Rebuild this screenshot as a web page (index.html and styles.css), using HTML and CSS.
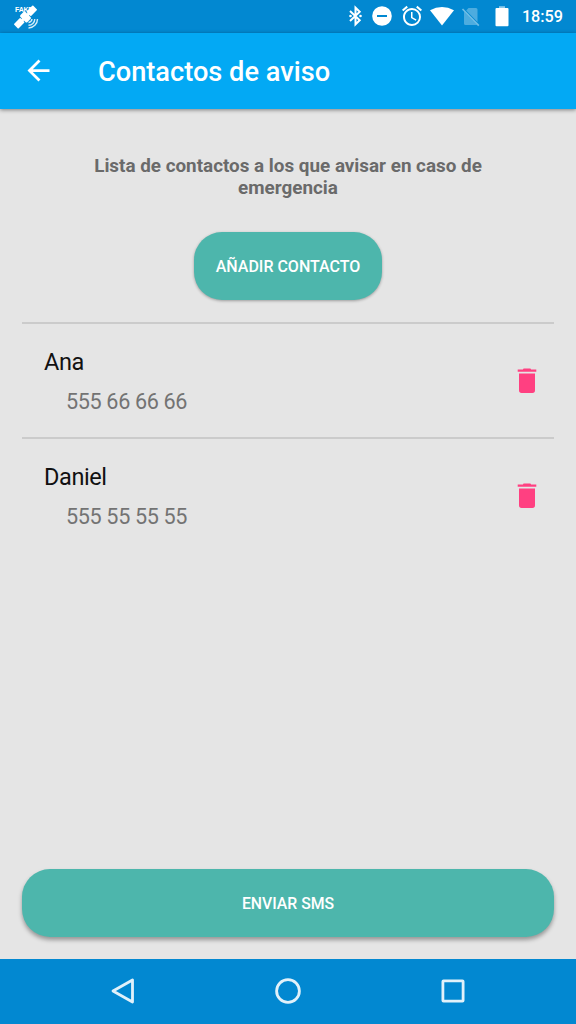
FILE: index.html
```html
<!DOCTYPE html>
<html lang="es">
<head>
<meta charset="utf-8">
<title>Contactos de aviso</title>
<link rel="stylesheet" href="styles.css">
</head>
<body>
<div class="screen">
  <div class="status">
    <svg class="satellite" width="26" height="26" viewBox="0 0 26 26">
      <text class="fake" x="1" y="7.800" textLength="18">FAKE</text>
      <g transform="translate(11.500 13) rotate(-45)" fill="#fff">
        <rect x="-13.500" y="-3.200" width="9.200" height="6.400" rx=".8"/>
        <rect x="-3.600" y="-5" width="7.200" height="10" rx="1.500"/>
        <rect x="4.300" y="-3.200" width="9.200" height="6.400" rx=".8"/>
        <rect x="-6" y="-1.500" width="12" height="3"/>
      </g>
      <path d="M14.500 18.500a4 4 0 0 0 3.500-3.500M14.500 21.300a6.500 6.500 0 0 0 6.300-6.300M14.500 24a9 9 0 0 0 9-9" fill="none" stroke="#d5ecf8" stroke-width="1.400"/>
    </svg>
    <div class="indicators">
      <svg width="24" height="24" viewBox="0 0 24 24"><path d="M7 7l9.700 9.200-4.200 4.100V3.700l4.200 4.100L7 17" fill="none" stroke="#fff" stroke-width="2"/><circle cx="7.500" cy="12" r="1.300" fill="#fff"/><circle cx="17.500" cy="12" r="1.300" fill="#fff"/></svg>
      <svg width="24" height="24" viewBox="0 0 24 24"><circle cx="12" cy="12" r="9.800" fill="#fff"/><path d="M7 12h10" stroke="#0288d1" stroke-width="2"/></svg>
      <svg width="24" height="24" viewBox="0 0 24 24"><path fill="#fff" d="M22 5.720l-4.600-3.860-1.290 1.530 4.600 3.860L22 5.720zM7.880 3.390L6.600 1.860 2 5.710l1.290 1.530 4.590-3.850zM12.500 8H11v6l4.750 2.850.75-1.230-4-2.370V8zM12 4c-4.970 0-9 4.030-9 9s4.020 9 9 9a9 9 0 0 0 0-18zm0 16c-3.870 0-7-3.130-7-7s3.130-7 7-7 7 3.130 7 7-3.130 7-7 7z"/></svg>
      <svg width="24" height="24" viewBox="0 0 24 24"><path d="M0 6.200Q12-.2 24 6.200L12 21.500z" fill="#fff"/></svg>
      <svg width="24" height="24" viewBox="0 0 24 24"><path d="M9.500 4H17q1.500 0 1.500 1.500V18L7.200 6.400zM5 7.500L18 20.700q-.3.300-1 .3H6.500Q5 21 5 19.500z" fill="#4dacdf"/><path d="M3.500 5L19.800 21.700" stroke="#6fbde6" stroke-width="1.700"/></svg>
      <svg width="24" height="24" viewBox="0 0 24 24"><path d="M9 2.200h6V4H9z" fill="#8ccbec"/><path d="M6.500 4h11q1 0 1 1v16.200q0 1-1 1h-11q-1 0-1-1V5q0-1 1-1z" fill="#fff"/></svg>
    </div>
    <span class="clock">18:59</span>
  </div>
  <header class="toolbar">
    <svg class="back" width="33" height="33" viewBox="0 0 24 24"><path fill="#fff" d="M20 11H7.830l5.590-5.590L12 4l-8 8 8 8 1.410-1.410L7.830 13H20v-2z"/></svg>
    <h1>Contactos de aviso</h1>
  </header>
  <main class="content">
    <p class="intro">Lista de contactos a los que avisar en caso de<br>emergencia</p>
    <button class="button add">AÑADIR CONTACTO</button>
    <ul class="contacts">
      <li class="contact">
        <div><div class="name">Ana</div><div class="phone">555 66 66 66</div></div>
        <svg class="trash" width="20" height="26" viewBox="0 0 20 26"><path d="M6 1.500Q6 .4 7 .4h6q1 0 1 1.100h5.300v2.300H.7V1.500zM2 5.500h16V22.300q0 2.600-2.500 2.600h-11Q2 24.900 2 22.300z" fill="#ff4081"/></svg>
      </li>
      <li class="contact">
        <div><div class="name">Daniel</div><div class="phone">555 55 55 55</div></div>
        <svg class="trash" width="20" height="26" viewBox="0 0 20 26"><path d="M6 1.500Q6 .4 7 .4h6q1 0 1 1.100h5.300v2.300H.7V1.500zM2 5.500h16V22.300q0 2.600-2.500 2.600h-11Q2 24.900 2 22.300z" fill="#ff4081"/></svg>
      </li>
    </ul>
    <button class="button send">ENVIAR SMS</button>
  </main>
  <nav class="navbar">
    <svg width="30" height="30" viewBox="0 0 30 30"><path d="M24.500 4v22L5 15z"/></svg>
    <svg width="30" height="30" viewBox="0 0 30 30"><circle cx="15" cy="15" r="11.400"/></svg>
    <svg width="30" height="30" viewBox="0 0 30 30"><rect x="4.900" y="4.900" width="20.200" height="20.200" rx=".6"/></svg>
  </nav>
</div>
</body>
</html>
```
FILE: styles.css
```css
* { box-sizing: border-box; }
body { margin: 0; font-family: Roboto, sans-serif; }
.screen { width: 576px; height: 1024px; display: flex; flex-direction: column; background: #e5e5e5; overflow: hidden; }
.status { height: 32.500px; flex: none; background: #0288d1; display: flex; align-items: center; padding: 0 13px 0 14px; color: #fff; }
.satellite { overflow: visible; margin-top: 2px; }
.fake { font: 700 7px "Liberation Sans", sans-serif; fill: #fff; }
.indicators { display: grid; grid-template-columns: 27px 29.5px 30px 29.500px 31px 24px; margin-left: 303px; }
.clock { margin-left: auto; font-size: 16.200px; font-weight: 500; white-space: nowrap; padding-top: 1px; }
.toolbar { height: 76.500px; flex: none; background: #03a9f4; display: flex; align-items: center; padding: 0 22px; box-shadow: 0 1px 4px rgba(0, 0, 0, .45); z-index: 1; }
.toolbar h1 { margin: 2px 0 0 43px; color: #fff; font-size: 27.200px; font-weight: 500; white-space: nowrap; }
.content { flex: 1; padding: 46px 22px 22px; display: flex; flex-direction: column; align-items: center; }
.intro { margin: 0; text-align: center; font-size: 18.850px; line-height: 22px; font-weight: 700; color: #6a6a6a; white-space: nowrap; }
.button { flex: none; height: 68px; border: 0; border-radius: 28px; background: #4db6ac; color: #fff; font: 500 16px Roboto, sans-serif; padding: 0; box-shadow: 0 1px 3px rgba(0, 0, 0, .32); }
.add { width: 188px; margin-top: 33px; }
.contacts { list-style: none; width: 100%; margin: 22px 0 0; padding: 0; }
.contact { height: 115px; border-top: 2px solid #cbcbcb; padding: 22px 17px 0 22px; display: flex; justify-content: space-between; }
.name { font-size: 23.500px; line-height: 32px; letter-spacing: -.4px; color: #111; }
.phone { font-size: 21.600px; line-height: 28px; letter-spacing: -.35px; margin: 10px 0 0 22px; color: #737373; }
.trash { margin-top: 22px; }
.send { width: 100%; margin-top: auto; box-shadow: 0 3px 4px rgba(0, 0, 0, .34); font-size: 15.800px; }
.navbar { height: 65px; flex: none; background: #0288d1; display: flex; justify-content: center; align-items: center; gap: 135px; padding-bottom: 1px; }
.navbar svg { fill: none; stroke: #e1f1fa; stroke-width: 2.800; stroke-linejoin: round; }
```
